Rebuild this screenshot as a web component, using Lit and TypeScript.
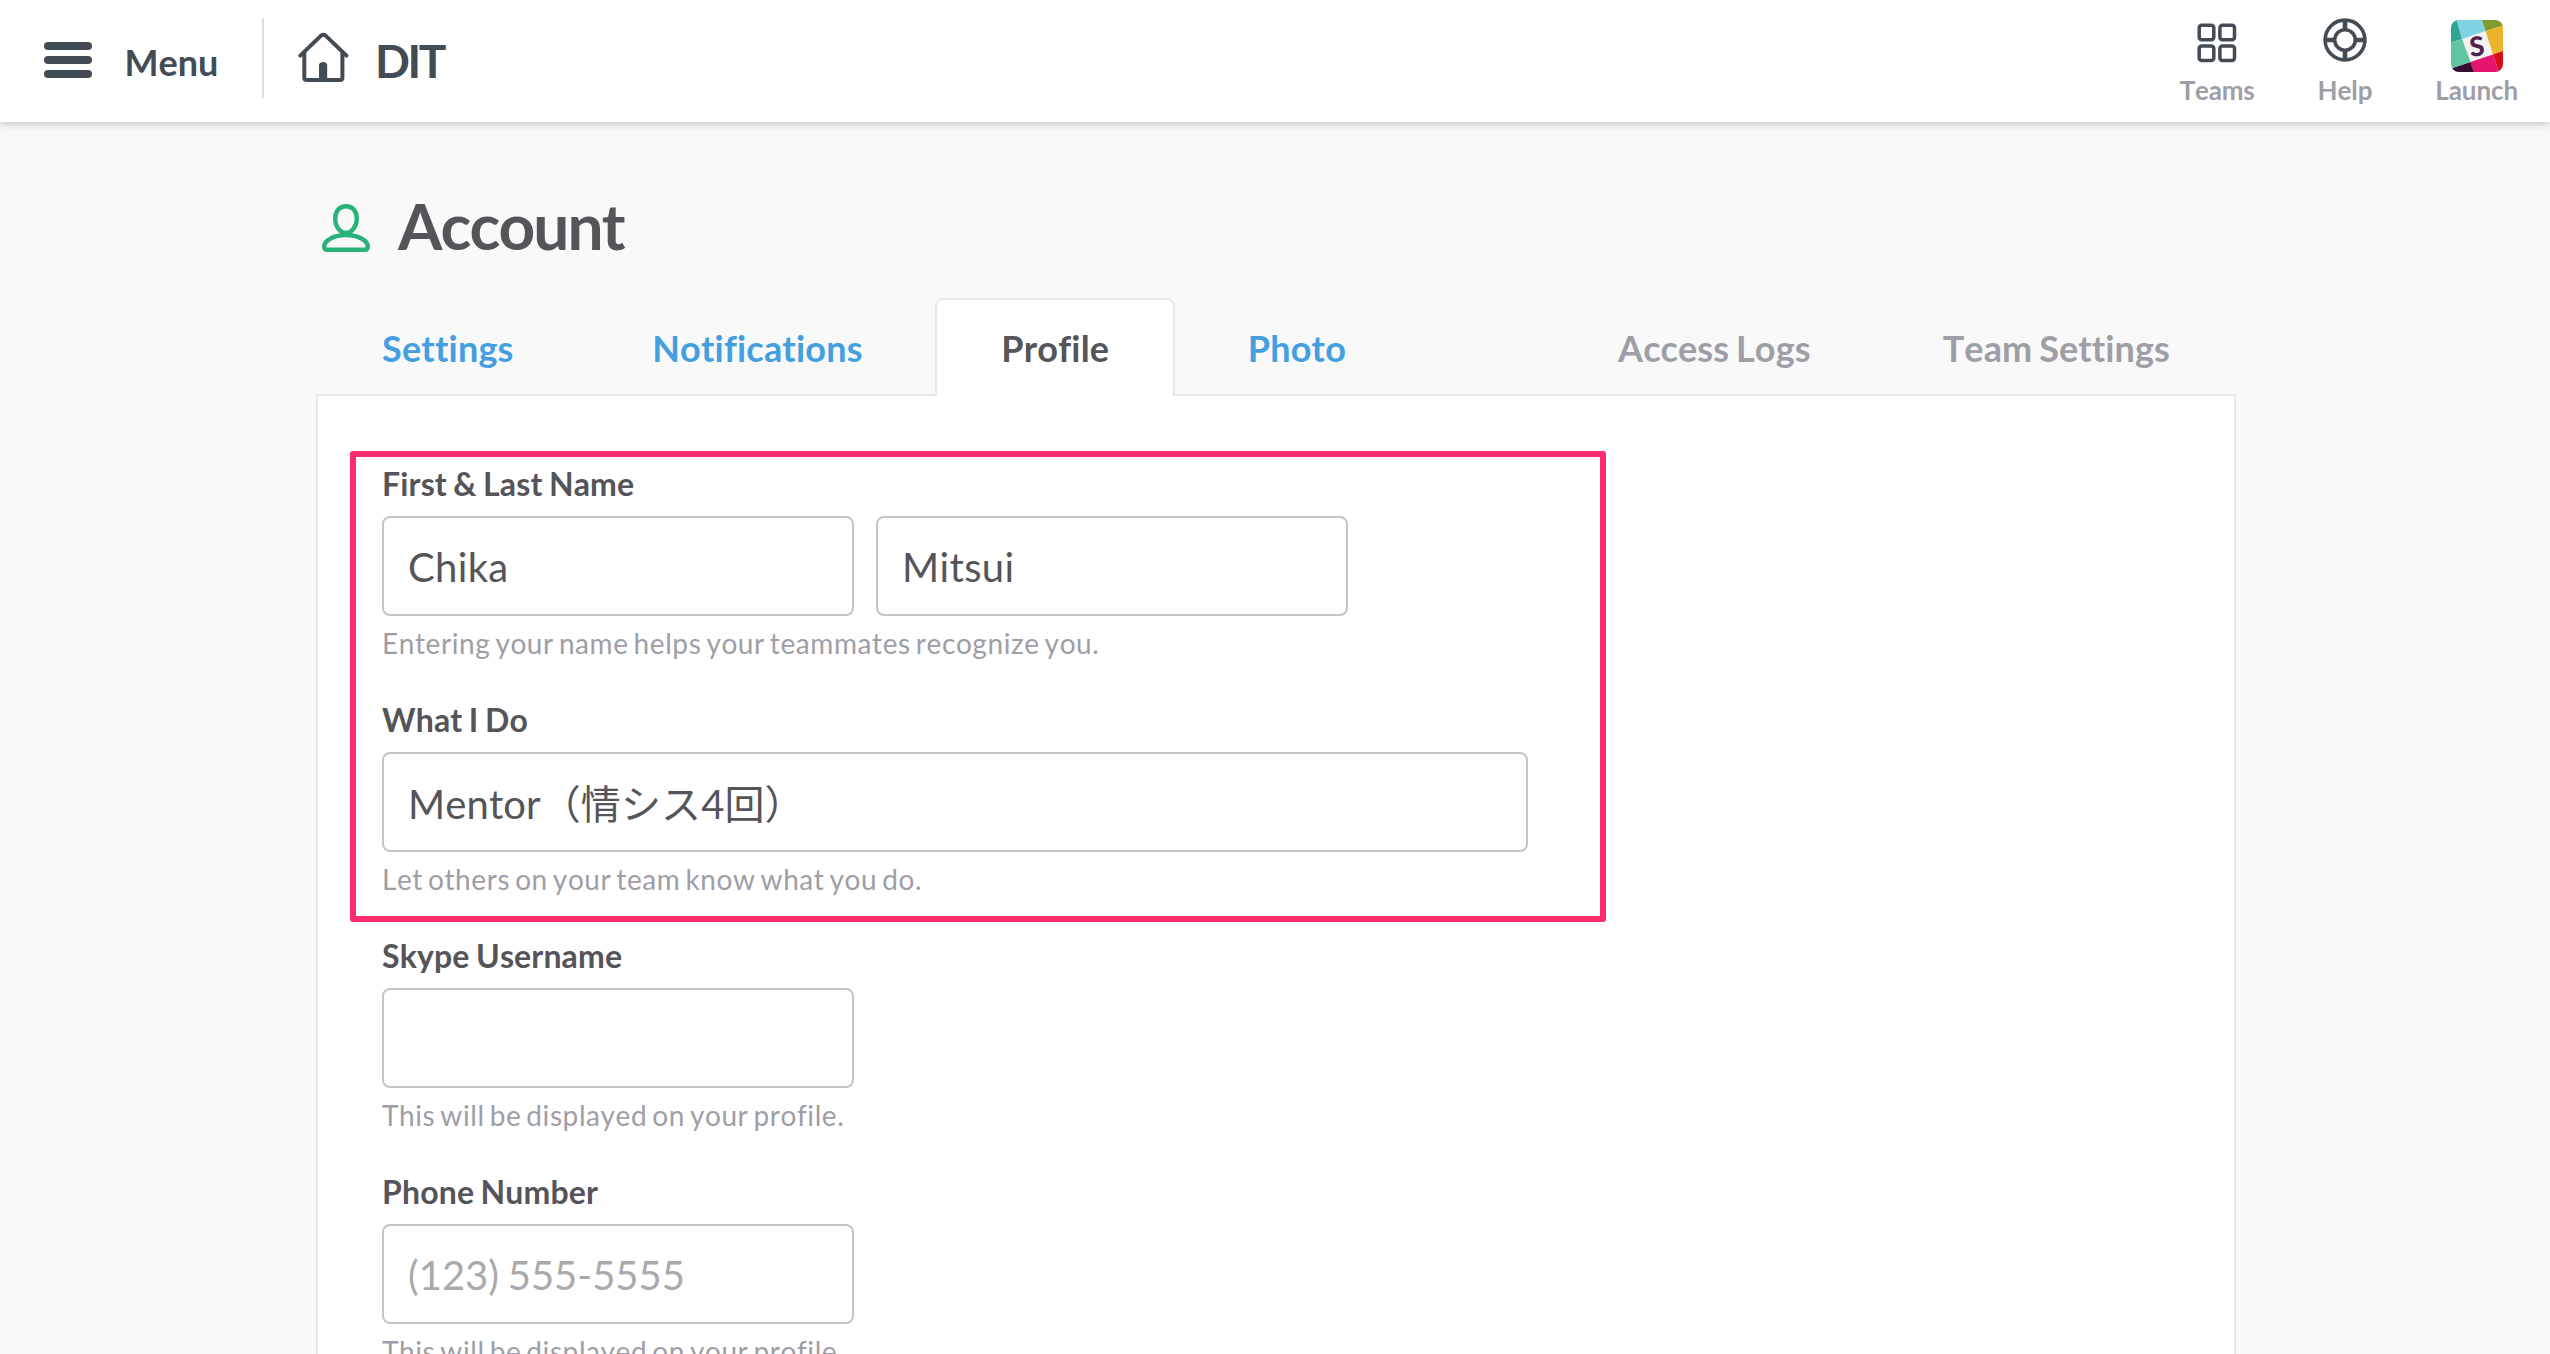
import { LitElement, html, css, svg, nothing } from "lit";
import { customElement, property } from "lit/decorators.js";
import { classMap } from "lit/directives/class-map.js";

interface Box {
  size: "half" | "wide";
  value?: string;
  placeholder?: string;
}

interface Field {
  label: string;
  hint: string;
  boxes: Box[];
}

const marked: Field[] = [
  {
    label: "First & Last Name",
    hint: "Entering your name helps your teammates recognize you.",
    boxes: [
      { size: "half", value: "Chika" },
      { size: "half", value: "Mitsui" },
    ],
  },
  {
    label: "What I Do",
    hint: "Let others on your team know what you do.",
    boxes: [{ size: "wide", value: "Mentor（情シス4回）" }],
  },
];

const plain: Field[] = [
  {
    label: "Skype Username",
    hint: "This will be displayed on your profile.",
    boxes: [{ size: "half" }],
  },
  {
    label: "Phone Number",
    hint: "This will be displayed on your profile.",
    boxes: [{ size: "half", placeholder: "(123) 555-5555" }],
  },
];

const menuIcon = html`<svg class="icon" width="48" height="36" viewBox="0 0 48 36">
  <g fill="currentColor">
    <rect width="48" height="8" rx="4" />
    <rect y="14" width="48" height="8" rx="4" />
    <rect y="28" width="48" height="8" rx="4" />
  </g>
</svg>`;

const homeIcon = html`<svg class="icon" width="52" height="52" viewBox="0 0 52 52">
  <g fill="none" stroke="currentColor" stroke-width="4" stroke-linecap="round" stroke-linejoin="round">
    <path d="M2.3 23.6 23 3.6Q25.3 1.8 27.6 3.6L48.4 23.6" />
    <path d="M6.3 20V45.500Q6.300 48 8.800 48H42Q44.400 48 44.400 45.500V20" />
  </g>
  <path d="M21 50V33.500Q21 30 25.100 30T29.200 33.500V50Z" fill="currentColor" />
</svg>`;

const personIcon = html`<svg class="person" width="48" height="48" viewBox="0 0 48 48">
  <g fill="none" stroke="currentColor" stroke-width="4.400" stroke-linejoin="round">
    <path d="M24 2.200C17.600 2.200 13.200 7 13.200 14.500C13.200 23 18.500 29 24 29S34.800 23 34.800 14.500C34.800 7 30.400 2.200 24 2.200Z" />
    <path d="M24 31C12 31 2.200 36.500 2.200 42.500Q2.200 45.800 5.500 45.800H42.500Q45.800 45.800 45.800 42.500C45.800 36.500 36 31 24 31Z" />
  </g>
</svg>`;

const teamsIcon = html`<svg class="icon" width="40" height="40" viewBox="0 0 40 40">
  <g fill="none" stroke="currentColor" stroke-width="3.500">
    ${[
      [2.2, 2.2],
      [22.9, 2.2],
      [2.2, 22.9],
      [22.9, 22.9],
    ].map(([x, y]) => svg`<rect x=${x} y=${y} width="14.600" height="14.600" rx="2.500" />`)}
  </g>
</svg>`;

const helpIcon = html`<svg class="icon" width="44" height="44" viewBox="0 0 44 44">
  <g fill="none" stroke="currentColor">
    <circle cx="22" cy="22" r="19.900" stroke-width="3.600" />
    <circle cx="22" cy="22" r="10.300" stroke-width="3.600" />
    <path d="M22 2V12M22 32V42M2 22H12M32 22H42" stroke-width="4.600" />
  </g>
</svg>`;

const launchIcon = html`<svg class="icon" width="52" height="52" viewBox="0 0 52 52">
  <defs>
    <clipPath id="tile"><rect width="52" height="52" rx="8" /></clipPath>
  </defs>
  <g clip-path="url(#tile)">
    <rect width="52" height="52" fill="#f4f2f0" />
    <path d="M0 0H6L11 19 0 22.500Z" fill="#2fa493" />
    <path d="M5.500 0H31L34.500 11 11 19Z" fill="#7fd3e2" />
    <path d="M31 0H52V5.500L34.500 11Z" fill="#7c9c2c" />
    <path d="M34.500 11 52 5.500V31L42 34.500Z" fill="#ecb32d" />
    <path d="M42 34.500 52 31V52H48Z" fill="#d60f14" />
    <path d="M19.500 42 42 34.500 48 52H22Z" fill="#e5156d" />
    <path d="M0 48.500 19.500 42 22.500 52H0Z" fill="#370c33" />
    <path d="M0 22.500 11 19 19.500 42 0 48.500Z" fill="#60c5a0" />
    <text class="mark" x="26" y="36" text-anchor="middle" transform="rotate(-6 26 27)">S</text>
  </g>
</svg>`;

@customElement("form-field")
class FormField extends LitElement {
  @property({ attribute: false }) field!: Field;

  static styles = css`
    :host {
      display: block;
    }
    .label {
      display: block;
      font-weight: 700;
      font-size: 32px;
      line-height: 42px;
      letter-spacing: 0.15px;
      word-spacing: -1.5px;
      color: #555459;
    }
    .row {
      display: flex;
      gap: 22px;
      margin: 11px 0 9px;
    }
    .box {
      box-sizing: border-box;
      height: 100px;
      margin: 0;
      padding: 1px 24px 0;
      border: 2px solid #c5c5c5;
      border-radius: 8px;
      background: #fff;
      color: #555459;
      font: inherit;
      font-size: 40px;
      font-kerning: none;
      letter-spacing: 0.35px;
      outline: none;
    }
    .box::placeholder {
      color: #aaa;
      opacity: 1;
      letter-spacing: 0;
      word-spacing: -1.5px;
    }
    .half {
      width: 472px;
    }
    .wide {
      width: 1146px;
      padding-top: 0;
      letter-spacing: 0.1px;
    }
    .hint {
      margin: 0;
      font-size: 28px;
      line-height: 36px;
      letter-spacing: 0.58px;
      word-spacing: -2.7px;
      color: #9e9ea6;
    }
  `;

  render() {
    const { label, hint, boxes } = this.field;
    return html`
      <label class="label">${label}</label>
      <div class="row">
        ${boxes.map(
          (b) => html`<input
            type="text"
            aria-label=${label}
            class=${classMap({ box: true, [b.size]: true })}
            .value=${b.value ?? ""}
            placeholder=${b.placeholder ?? nothing}
          />`
        )}
      </div>
      <p class="hint">${hint}</p>
    `;
  }
}

@customElement("app-root")
class AppRoot extends LitElement {
  static styles = css`
    :host {
      display: block;
      height: 1354px;
      overflow: hidden;
      background: #f9f9f9;
      color: #555459;
      font-family: Lato, "Noto Sans CJK JP", sans-serif;
      font-kerning: none;
      font-variant-ligatures: none;
    }
    .icon,
    .person {
      display: block;
      flex: none;
    }
    .header {
      position: relative;
      box-sizing: border-box;
      display: flex;
      height: 122px;
      padding: 0 32px 0 44px;
      background: #fff;
      color: #434c54;
      box-shadow: 0 2px 8px rgba(0, 0, 0, 0.22);
    }
    .menu {
      box-sizing: border-box;
      display: flex;
      gap: 32.5px;
      width: 220px;
      height: 80px;
      margin-top: 18px;
      border-right: 2px solid #ddd;
      font-weight: 700;
      font-size: 36px;
      line-height: 88px;
    }
    .menu .icon {
      margin-top: 24px;
    }
    .team {
      display: flex;
      gap: 25px;
      padding-left: 34px;
      font-weight: 700;
      font-size: 46px;
      line-height: 122px;
      letter-spacing: -2.4px;
    }
    .team .icon {
      margin-top: 32px;
    }
    .actions {
      display: flex;
      margin-left: auto;
      gap: 63px;
      font-weight: 700;
      font-size: 26px;
      line-height: 32px;
      letter-spacing: -0.1px;
      color: #9e9ea6;
    }
    .action {
      display: flex;
      flex-direction: column;
      align-items: center;
      justify-content: flex-end;
      height: 106px;
    }
    .teams {
      letter-spacing: -0.2px;
    }
    .action .icon {
      color: #434c54;
    }
    .teams .icon {
      margin-bottom: 11px;
    }
    .help .icon {
      margin-bottom: 12px;
    }
    .launch .icon {
      margin-bottom: 2px;
    }
    .mark {
      font-family: Lato, sans-serif;
      font-weight: 900;
      font-size: 27px;
      fill: #4f2350;
    }
    .main {
      width: 1920px;
      margin: 0 auto;
      padding: 65px 0 0 2px;
    }
    .title {
      display: flex;
      gap: 28px;
      height: 76px;
      margin: 0 0 35px;
      padding-left: 6px;
      font-weight: 700;
      font-size: 64px;
      line-height: 78px;
      letter-spacing: -1.9px;
    }
    .person {
      margin-top: 17px;
      color: #2ab27b;
    }
    .tabs {
      position: relative;
      display: flex;
      gap: 6.5px;
      margin-bottom: -2px;
    }
    .tab {
      box-sizing: border-box;
      height: 98px;
      padding: 0 64px;
      border: 2px solid transparent;
      border-bottom: 0;
      border-radius: 8px 8px 0 0;
      font-weight: 700;
      font-size: 36px;
      line-height: 96px;
      letter-spacing: 0.2px;
      white-space: nowrap;
      color: #439fe0;
    }
    .active {
      background: #fff;
      border-color: #e8e8e8;
      color: #555459;
    }
    .side {
      display: flex;
      margin-left: auto;
    }
    .side .tab {
      letter-spacing: 0.1px;
      word-spacing: -2px;
      color: #9e9ea6;
    }
    .panel {
      padding: 67px 64px 0;
      border: 2px solid #e8e8e8;
      background: #fff;
      min-height: 1000px;
    }
    .fields {
      position: relative;
      display: grid;
      gap: 38px;
      margin-bottom: 38px;
    }
    /* Callout frame drawn over the form */
    .callout {
      position: absolute;
      box-sizing: border-box;
      left: -32px;
      top: -12px;
      width: 1256px;
      height: 471px;
      border: 6px solid #ff2d6e;
      border-radius: 3px;
      pointer-events: none;
    }
  `;

  private fields(list: Field[]) {
    return list.map((f) => html`<form-field .field=${f}></form-field>`);
  }

  render() {
    return html`
      <header class="header">
        <div class="menu">${menuIcon}<span>Menu</span></div>
        <div class="team">${homeIcon}<span>DIT</span></div>
        <nav class="actions">
          <div class="action teams">${teamsIcon}<span>Teams</span></div>
          <div class="action help">${helpIcon}<span>Help</span></div>
          <div class="action launch">${launchIcon}<span>Launch</span></div>
        </nav>
      </header>
      <main class="main">
        <h1 class="title">${personIcon}<span>Account</span></h1>
        <nav class="tabs">
          <div class="tab">Settings</div>
          <div class="tab">Notifications</div>
          <div class="tab active">Profile</div>
          <div class="tab">Photo</div>
          <div class="side">
            <div class="tab">Access Logs</div>
            <div class="tab">Team Settings</div>
          </div>
        </nav>
        <section class="panel">
          <div class="fields">
            ${this.fields(marked)}
            <div class="callout"></div>
          </div>
          <div class="fields">${this.fields(plain)}</div>
        </section>
      </main>
    `;
  }
}
